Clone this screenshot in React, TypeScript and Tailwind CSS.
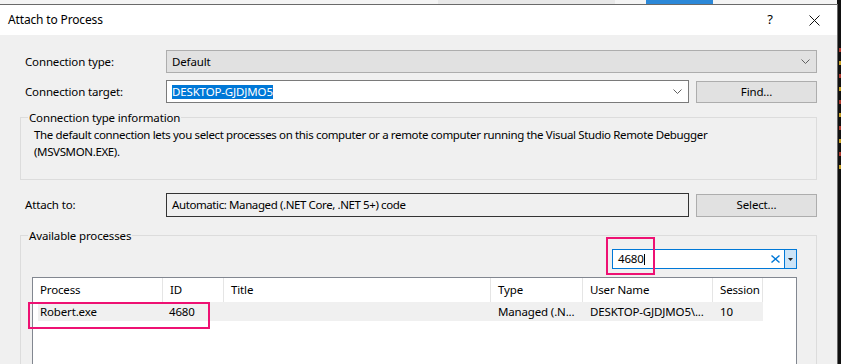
import React from "react";

const COLS = [
  { name: "Process", w: "w-[130px]" },
  { name: "ID", w: "w-[61px]" },
  { name: "Title", w: "w-[267px]" },
  { name: "Type", w: "w-[92px]" },
  { name: "User Name", w: "w-[130px]" },
  { name: "Session", w: "w-[50px]" },
];

const EDITOR_BITS = [
  "bg-[#b03a2e]",
  "bg-[#c9a227]",
  "bg-[#b03a2e]",
  "bg-[#c9a227]",
  "bg-[#b03a2e]",
  "bg-[#c9a227]",
  "bg-[#b03a2e]",
  "bg-[#c9a227]",
  "bg-[#b03a2e]",
  "bg-[#c9a227]",
];

function Chevron() {
  return (
    <svg width="9" height="5" viewBox="0 0 9 5" className="shrink-0">
      <path d="M0.5 0.5 L4.5 4.5 L8.5 0.5" fill="none" stroke="#606060" strokeWidth="1" />
    </svg>
  );
}

export default function App() {
  return (
    <div className="relative w-[841px] h-[364px] overflow-hidden bg-[#111] flex flex-col font-['Noto_Sans',sans-serif] text-[11.5px] tracking-[-0.15px] text-black">
      {/* stuff behind the dialog */}
      <div className="h-[4px] shrink-0 flex bg-[#f4f4f4]">
        <div className="w-[438px]" />
        <div className="w-[177px] bg-[#e8e8e8]" />
        <div className="w-[31px]" />
        <div className="w-[67px] bg-[#2b88d8]" />
        <div className="flex-1" />
        <div className="w-[4px] bg-[#111]" />
      </div>

      <div className="flex flex-1 min-h-0">
        <div className="w-[838px] shrink-0 border-t border-r border-[#6a6a6a] bg-[#f0f0f0] flex flex-col">
          {/* title bar */}
          <div className="h-[30px] shrink-0 bg-white flex items-center">
            <span className="pl-[8px] text-[12px]">Attach to Process</span>
            <div className="ml-auto w-[44px] flex justify-center text-[13px]">?</div>
            <div className="w-[45px] flex justify-center">
              <svg width="11" height="11" viewBox="0 0 11 11">
                <path d="M0.5 0.5 L10.5 10.5 M10.5 0.5 L0.5 10.5" stroke="#111" strokeWidth="1" />
              </svg>
            </div>
          </div>

          {/* body */}
          <div className="flex flex-col pt-[15px]">
            <div className="flex items-center h-[23px] pl-[25px] pr-[20px]">
              <span className="w-[141px] shrink-0">Connection type:</span>
              <div className="flex-1 h-[23px] bg-[#e1e1e1] border border-[#adadad] flex items-center pl-[5px] pr-[6px]">
                <span className="flex-1">Default</span>
                <Chevron />
              </div>
            </div>

            <div className="flex items-center h-[23px] mt-[7px] pl-[25px] pr-[20px]">
              <span className="w-[141px] shrink-0">Connection target:</span>
              <div className="w-[523px] h-[23px] bg-white border border-[#7a7a7a] flex items-center pl-[5px] pr-[6px]">
                <span className="flex-1">
                  <span className="bg-[#0078d7] text-white leading-[14px] inline-block">DESKTOP-GJDJMO5</span>
                </span>
                <Chevron />
              </div>
              <button className="ml-[7px] w-[121px] h-[22px] bg-[#e1e1e1] border border-[#adadad] flex items-center justify-center">
                Find...
              </button>
            </div>

            <fieldset className="mt-[6px] mx-[20px] border border-[#dcdcdc] pb-[19px]">
              <legend className="ml-[7px] px-[1px] leading-[17px]">Connection type information</legend>
              <p className="leading-[17px] pl-[13px] tracking-[-0.36px]">
                The default connection lets you select processes on this computer or a remote computer running the
                Visual Studio Remote Debugger
                <br />
                (MSVSMON.EXE).
              </p>
            </fieldset>

            <div className="flex items-center h-[24px] mt-[13px] pl-[25px] pr-[20px]">
              <span className="w-[141px] shrink-0">Attach to:</span>
              <div className="w-[523px] h-[24px] border border-[#333] flex items-center pl-[5px] tracking-[-0.4px]">
                Automatic: Managed (.NET Core, .NET 5+) code
              </div>
              <button className="ml-[7px] w-[121px] h-[23px] bg-[#e1e1e1] border border-[#adadad] flex items-center justify-center">
                Select...
              </button>
            </div>

            <fieldset className="mt-[10px] mx-[20px] border border-[#dcdcdc] h-[200px]">
              <legend className="ml-[7px] px-[1px] leading-[17px]">Available processes</legend>

              <div className="pl-[11px] pr-[19px]">
                <div className="flex justify-end mt-[5px]">
                  <div className="w-[185px] h-[20px] border border-[#0078d7] bg-white flex items-center">
                    <span className="pl-[5px]">4680</span>
                    <span className="w-px h-[11px] bg-black" />
                    <svg width="9" height="8" viewBox="0 0 9 8" className="ml-auto mr-[4px]">
                      <path d="M0.5 0.5 L8.5 7.5 M8.5 0.5 L0.5 7.5" stroke="#0078d7" strokeWidth="1.4" />
                    </svg>
                    <div className="w-[13px] h-[20px] -mr-px border border-[#0078d7] bg-[#cce4f7] flex items-center justify-center">
                      <svg width="5" height="3" viewBox="0 0 5 3">
                        <path d="M0 0 H5 L2.5 3 Z" fill="#222" />
                      </svg>
                    </div>
                  </div>
                </div>

                <div className="mt-[8px] h-[100px] border border-[#828790] bg-white">
                  <div className="flex h-[24px]">
                    {COLS.map((c) => (
                      <div key={c.name} className={`${c.w} border-r border-[#e5e5e5] pl-[7px] flex items-center`}>
                        {c.name}
                      </div>
                    ))}
                  </div>
                  <div className="flex h-[19px] ml-[5px] w-[725px] bg-[#f0f0f0] items-center">
                    <span className="w-[125px] pl-[2px]">Robert.exe</span>
                    <span className="w-[61px] pl-[6px]">4680</span>
                    <span className="w-[267px]" />
                    <span className="w-[92px] pl-[7px]">Managed (.N...</span>
                    <span className="w-[130px] pl-[7px]">DESKTOP-GJDJMO5\...</span>
                    <span className="w-[50px] pl-[7px]">10</span>
                  </div>
                </div>
              </div>
            </fieldset>
          </div>
        </div>

        {/* code editor peeking out on the right */}
        <div className="flex-1 flex flex-col gap-[9px] pt-[44px] pl-px">
          {EDITOR_BITS.map((c, i) => (
            <div key={i} className={`w-[2px] h-[4px] ${c}`} />
          ))}
        </div>
      </div>

      {/* annotation boxes */}
      <div className="absolute left-[606px] top-[237px] w-[49px] h-[38px] border-2 border-[#ee1173]" />
      <div className="absolute left-[28px] top-[302px] w-[182px] h-[27px] border-2 border-[#ee1173]" />
    </div>
  );
}
